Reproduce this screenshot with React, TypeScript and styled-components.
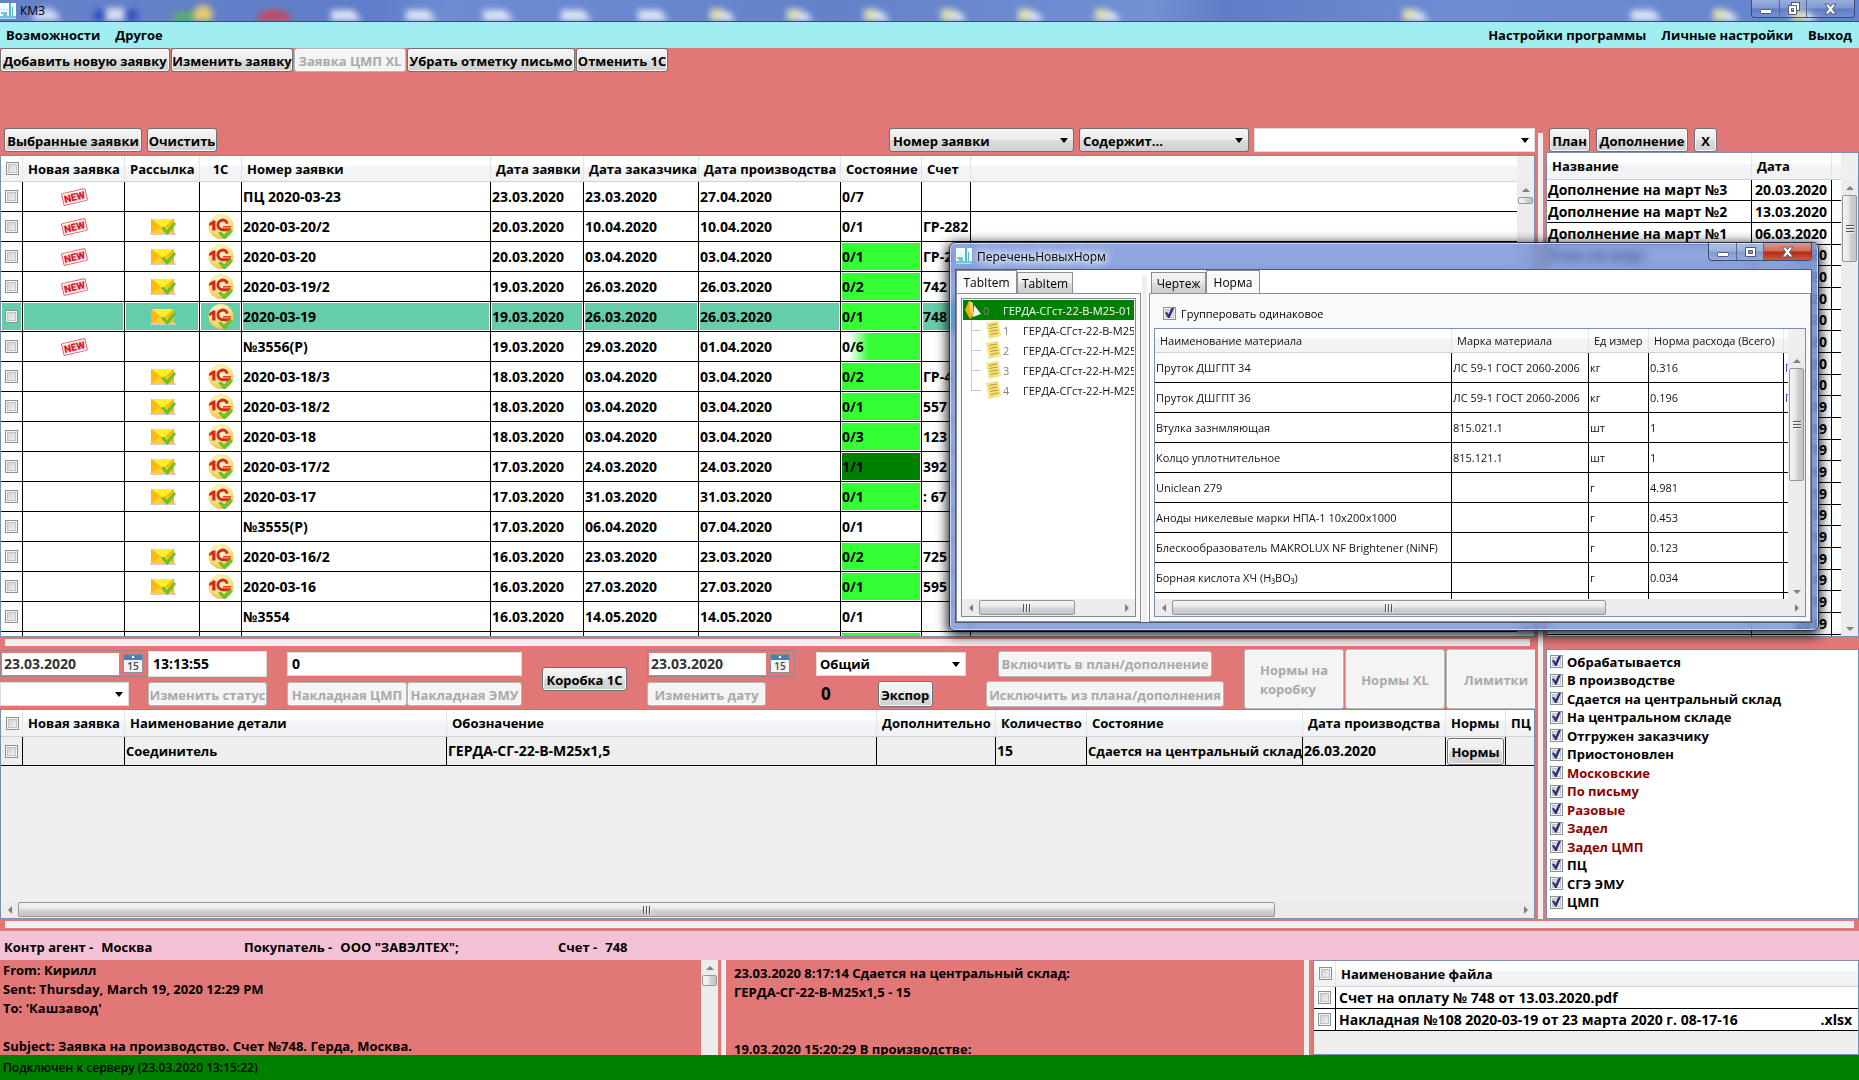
import React from 'react';
import styled, { createGlobalStyle, css } from 'styled-components';

const salmon = '#e27777';
const panelGray = '#efefef';
const frameBlue = '#7a8fae';

const GlobalStyle = createGlobalStyle`
  *, *::before, *::after { box-sizing: border-box; }
  body {
    margin: 0;
    background: ${salmon};
    overflow: hidden;
  }
  body, button, input, select, table {
    font-family: "Open Sans", "Noto Sans", sans-serif;
    font-size: 13px;
    font-weight: 700;
    color: #000;
  }
`;

const face = 'linear-gradient(#f4f4f4 0%, #ececec 50%, #dcdcdc 51%, #cfcfcf 100%)';

/* ---------- shared controls ---------- */

const Button = styled.button<{ $w?: number; $h?: number; $grow?: boolean }>`
  flex: ${p => (p.$grow ? '1 0 auto' : '0 0 auto')};
  width: ${p => (p.$w ? `${p.$w}px` : 'auto')};
  height: ${p => p.$h ?? 24}px;
  padding: 2px 0 0;
  display: flex;
  align-items: center;
  justify-content: center;
  line-height: 19px;
  white-space: nowrap;
  text-align: left;
  border: 1px solid #707070;
  border-radius: 3px;
  background: ${face};
  box-shadow: inset 0 0 0 1px #fafafa;
  &:disabled {
    color: #a9a9a9;
    border-color: #b6b6b6;
    background: #f4f4f4;
  }
`;

const Check = styled.input.attrs({ type: 'checkbox' })`
  appearance: none;
  flex: none;
  display: block;
  width: 13px;
  height: 13px;
  margin: 0;
  border: 1px solid #8e8f8f;
  background: linear-gradient(135deg, #c8ccd2, #f6f6f6);
  box-shadow: inset 0 0 0 1px #f4f4f4, inset 0 0 0 2px #bfc3c8;
  &:checked::before {
    content: '';
    display: block;
    width: 9px;
    height: 10px;
    margin: 0 0 0 1px;
    background: #2b2f7c;
    clip-path: polygon(0 45%, 22% 40%, 40% 62%, 72% 0, 100% 0, 52% 100%, 34% 100%);
  }
`;

const SelectBox = styled.span<{ $w?: number; $plain?: boolean; $h?: number }>`
  position: relative;
  display: block;
  flex: none;
  width: ${p => (p.$w ? `${p.$w}px` : '100%')};
  height: ${p => p.$h ?? 24}px;
  border: 1px solid ${p => (p.$plain ? '#dcdcdc' : '#707070')};
  border-radius: ${p => (p.$plain ? 0 : 3)}px;
  background: ${p => (p.$plain ? '#fff' : face)};
  &::after {
    content: '';
    position: absolute;
    right: 5px;
    top: 9px;
    border: 4px solid transparent;
    border-top: 5px solid #000;
    border-bottom: 0;
    pointer-events: none;
  }
`;

const SelectInner = styled.select`
  appearance: none;
  width: 100%;
  height: 100%;
  border: 0;
  padding: 1px 14px 0 3px;
  background: transparent;
`;

function Select(props: { label: string; value?: string; w?: number; plain?: boolean }) {
  return (
    <SelectBox $w={props.w} $plain={props.plain}>
      <SelectInner aria-label={props.label} defaultValue={props.value ?? ''}>
        <option>{props.value ?? ''}</option>
      </SelectInner>
    </SelectBox>
  );
}

const TextInput = styled.input<{ $w: number; $h?: number }>`
  flex: none;
  width: ${p => p.$w}px;
  height: ${p => p.$h ?? 24}px;
  padding: 0 4px;
  border: 1px solid #dcdcdc;
  background: #fff;
  font-size: 14px;
`;

/* ---------- scroll bars ---------- */

const Track = styled.div<{ $dir: 'v' | 'h' }>`
  flex: none;
  display: flex;
  align-items: center;
  flex-direction: ${p => (p.$dir === 'v' ? 'column' : 'row')};
  background: #ececec;
  ${p => (p.$dir === 'v' ? 'width: 17px;' : 'height: 17px;')}
`;

const Arrow = styled.span<{ $to: 'up' | 'down' | 'left' | 'right' }>`
  flex: none;
  width: 17px;
  height: 15px;
  display: flex;
  align-items: center;
  justify-content: center;
  &::before {
    content: '';
    border: 4px solid transparent;
    ${p => p.$to === 'up' && 'border-top: 0; border-bottom-color: #808080;'}
    ${p => p.$to === 'down' && 'border-bottom: 0; border-top-color: #808080;'}
    ${p => p.$to === 'left' && 'border-left: 0; border-right-color: #808080;'}
    ${p => p.$to === 'right' && 'border-right: 0; border-left-color: #808080;'}
  }
`;

const Thumb = styled.span<{ $dir: 'v' | 'h' }>`
  flex: none;
  display: flex;
  align-items: center;
  justify-content: center;
  border: 1px solid #979797;
  border-radius: 2px;
  background: linear-gradient(${p => (p.$dir === 'v' ? '90deg' : '180deg')}, #f5f5f5, #e6e6e8 49%, #d2d3d6 51%, #c4c5c9);
  ${p => (p.$dir === 'v' ? 'width: 15px;' : 'height: 15px;')}
`;

const Grip = styled.span<{ $dir: 'v' | 'h' }>`
  width: 8px;
  height: 8px;
  background: repeating-linear-gradient(
    ${p => (p.$dir === 'v' ? '180deg' : '90deg')},
    #555 0 1px,
    #f0f0f0 1px 2px,
    transparent 2px 3px
  );
`;

const Gap = styled.span`
  flex: 1;
`;

function ScrollBar(props: { dir: 'v' | 'h'; size: string; grip?: boolean; end?: boolean }) {
  const v = props.dir === 'v';
  return (
    <Track $dir={props.dir}>
      <Arrow $to={v ? 'up' : 'left'} />
      <Thumb $dir={props.dir} style={v ? { height: props.size } : { width: props.size }}>
        {props.grip && <Grip $dir={props.dir} />}
      </Thumb>
      <Gap />
      {props.end !== false && <Arrow $to={v ? 'down' : 'right'} />}
    </Track>
  );
}

/* ---------- data grids ---------- */

const GridFrame = styled.div<{ $gray?: boolean; $grow?: boolean; $h?: number }>`
  display: flex;
  min-height: 0;
  min-width: 0;
  overflow: hidden;
  border: 1px solid ${frameBlue};
  background: ${p => (p.$gray ? panelGray : '#fff')};
  ${p => p.$grow && 'flex: 1 1 0;'}
  ${p => p.$h && `height: ${p.$h}px;`}
`;

const GridView = styled.div`
  flex: 1;
  min-width: 0;
  overflow: hidden;
`;

const Column = styled.div`
  display: flex;
  flex-direction: column;
  flex: 1;
  min-width: 0;
  min-height: 0;
`;

const Fixed = styled.div`
  flex: none;
  display: flex;
  flex-direction: column;
`;

const SideTrack = styled.div`
  flex: 1;
  display: flex;
  min-height: 0;
`;

const HeaderCorner = styled.div<{ $h: number }>`
  flex: none;
  height: ${p => p.$h}px;
  background: ${panelGray};
`;

const Table = styled.table<{ $head: number; $row: number; $light?: boolean }>`
  width: 100%;
  table-layout: fixed;
  border-collapse: separate;
  border-spacing: 0;
  th, td {
    padding: 0;
    text-align: left;
    white-space: nowrap;
    overflow: hidden;
    line-height: 20px;
  }
  td { font-size: 14px; }
  th {
    height: ${p => p.$head}px;
    padding-left: 5px;
    border-right: 1px solid #e2e4e8;
    border-bottom: 1px solid #cfd2d6;
    background: linear-gradient(#fff 0%, #fff 40%, #f4f5f7 41%, #f0f2f5 100%);
  }
  td {
    height: ${p => p.$row}px;
    padding-left: 1px;
    border-right: 1px solid #000;
    border-bottom: 1px solid #000;
  }
  th:last-child, td:last-child { border-right: 0; }
  td input { margin-left: 3px; }
  ${p =>
    p.$light &&
    css`
      th, td { font-size: 11px; font-weight: 400; color: #111; }
    `}
`;

const OrderRow = styled.tr<{ $selected?: boolean }>`
  ${p =>
    p.$selected &&
    css`
      td { background: #66cdaa; box-shadow: inset 0 0 0 1px #fff; }
      td:last-child { background: #fff; }
    `}
`;

const StateCell = styled.td<{ $fill?: string }>`
  && {
    ${p => p.$fill && `background: ${p.$fill}; box-shadow: inset 0 0 0 1px #fff;`}
  }
`;

const StatusText = styled.span`
  font-size: 13px;
`;

const CenterHead = styled.div`
  padding-right: 5px;
  text-align: center;
`;

const Centered = styled.div`
  display: flex;
  justify-content: center;
  align-items: center;
  height: 28px;
`;

/* ---------- icons ---------- */

const NewIcon = () => (
  <svg width="27" height="18" viewBox="0 0 27 18">
    <g transform="rotate(-13 13.5 9)">
      <rect x="1.5" y="3" width="24" height="12" rx="1" fill="#fff" stroke="#e65a62" strokeWidth="1" />
      <rect x="3" y="4.5" width="21" height="9" fill="#fbdfe1" />
      <text x="13.5" y="12.6" textAnchor="middle" fontFamily="Roboto, sans-serif" fontWeight="900" fontSize="10" fill="#d3202c">
        NEW
      </text>
    </g>
  </svg>
);

const MailIcon = () => (
  <svg width="26" height="18" viewBox="0 0 26 18">
    <rect x="0" y="15" width="26" height="2" rx="1" fill="#cfcfcf" />
    <rect x="1" y="1" width="23" height="15" rx="1" fill="#fdb812" />
    <path d="M1 16 L10 8 H15 L24 16 Z" fill="#ffcf2b" />
    <path d="M1 1 H24 L13 11 Z" fill="#ffee2a" />
    <path d="M1 1 L13 11 L24 1" fill="none" stroke="#e8b400" strokeWidth="0.8" />
    <path d="M11 10 L14 8.5 L17 12 L24 4 L26 6 L18 16.5 H16.5 Z" fill="#6cc22c" />
  </svg>
);

const OneCIcon = () => (
  <svg width="26" height="26" viewBox="0 0 26 26">
    <defs>
      <radialGradient id="oneC" cx="0.45" cy="0.3" r="0.7">
        <stop offset="0" stopColor="#fffbe0" />
        <stop offset="0.55" stopColor="#fbea8c" />
        <stop offset="1" stopColor="#ecc04a" />
      </radialGradient>
    </defs>
    <circle cx="13" cy="12.5" r="12.5" fill="url(#oneC)" />
    <path d="M1 9.500 L5 6.500 H7.500 V16.500 H4.200 V10.800 L1 12 Z" fill="#d8291f" />
    <path d="M19.300 9.600 A4.800 4.800 0 1 0 15 15.700 H23" fill="none" stroke="#d8291f" strokeWidth="3" />
    <path d="M15 12.800 H23" fill="none" stroke="#d8291f" strokeWidth="1.400" />
    <path d="M10 18.500 L13 17.500 L16 20.500 L22.500 14.500 L25 17 L17.500 25 H15.500 Z" fill="#6cc22c" />
  </svg>
);

const AppIcon = () => (
  <svg width="16" height="16" viewBox="0 0 16 16">
    <rect width="16" height="16" fill="#f3fbfd" />
    <path d="M9 0 H11 V13 H9 Z M12 4 H13 V13 H12 Z" fill="#57b6cf" />
    <path d="M1 9 H7 V11 H1 Z M0 13 H16 V15.500 H0 Z M3 11 H7 V13 H3 Z" fill="#6fc6da" />
    <path d="M0 6 H8 V7 H0 Z" fill="#cdeaf2" />
  </svg>
);

const CalendarIcon = () => (
  <svg width="20" height="19" viewBox="0 0 20 19">
    <rect x="0.5" y="0.5" width="19" height="18" fill="#f4f4f4" stroke="#8b8f96" />
    <rect x="1" y="1" width="18" height="5" fill="#4a7fb0" />
    <circle cx="10" cy="3" r="1.2" fill="#fff" />
    <text x="10" y="15.5" textAnchor="middle" fontFamily="Open Sans, sans-serif" fontWeight="600" fontSize="10" fill="#4a4a4a">
      15
    </text>
  </svg>
);

const RootIcon = () => (
  <svg width="16" height="18" viewBox="0 0 16 18">
    <path d="M4 0 L8 2 V15 L5 18 L0 9 Z" fill="#f7a81b" />
    <path d="M4 0 L8 2 V15 L5 10 Z" fill="#ffd25a" />
    <path d="M9 4 L16 13 L8 16 Z" fill="#f2f6f8" />
  </svg>
);

const SheetIcon = () => (
  <svg width="15" height="18" viewBox="0 0 15 18">
    <path d="M0 2 L12 0 L15 15 L3 18 Z" fill="#f4e27c" />
    <path d="M3 4.500 L11 3 M3.500 7.500 L11.500 6 M4 10.500 L12 9 M4.500 13.500 L12.500 12" stroke="#b99a2e" strokeWidth="1" />
  </svg>
);

const MinGlyph = () => (
  <svg width="14" height="12" viewBox="0 0 14 12">
    <rect x="1.5" y="6.5" width="11" height="4" rx="1" fill="#fff" stroke="#555b6e" />
  </svg>
);
const MaxGlyph = () => (
  <svg width="13" height="12" viewBox="0 0 13 12">
    <path fillRule="evenodd" d="M1.500 1.500 H11.500 V10.500 H1.500 Z M4.500 4.500 V7.500 H8.500 V4.500 Z" fill="#fff" stroke="#555b6e" />
  </svg>
);
const RestoreGlyph = () => (
  <svg width="13" height="13" viewBox="0 0 13 13">
    <rect x="4.5" y="0.5" width="8" height="8" fill="#fff" stroke="#555b6e" />
    <path fillRule="evenodd" d="M1.500 3.500 H9.500 V12.500 H1.500 Z M4.500 6.500 V9.500 H6.500 V6.500 Z" fill="#fff" stroke="#555b6e" />
  </svg>
);
const CloseGlyph = () => (
  <svg width="13" height="12" viewBox="0 0 13 12">
    <path d="M1 1 H4.500 L6.500 3.500 L8.500 1 H12 L8.500 6 L12 11 H8.500 L6.500 8.500 L4.500 11 H1 L4.500 6 Z" fill="#fff" stroke="#555b6e" />
  </svg>
);

/* ---------- main window chrome ---------- */

const Window = styled.div`
  display: flex;
  flex-direction: column;
  height: 100vh;
  background: ${salmon};
`;

const TitleBar = styled.header`
  position: relative;
  flex: none;
  display: flex;
  align-items: center;
  height: 22px;
  overflow: hidden;
  border-bottom: 1px solid #3b4a78;
  background: linear-gradient(100deg, #6583c8, #5f7dc8 20%, #6d8cd2 24%, #6482ca 45%, #7290d4 62%, #5f7dc6 66%, #6f8dd3 78%, #6583cc);
`;

const Desktop = styled.svg`
  position: absolute;
  left: 0;
  top: 0;
  width: 1859px;
  height: 21px;
  filter: blur(3px);
`;

const TitleText = styled.span`
  position: relative;
  display: flex;
  align-items: center;
  gap: 4px;
  font-size: 12px;
  font-weight: 400;
`;

const Caption = styled.div<{ $glass?: boolean }>`
  position: absolute;
  top: 0;
  right: ${p => (p.$glass ? 6 : 4)}px;
  display: flex;
  height: 18px;
  border: 1px solid #3d4a73;
  border-top: 0;
  border-radius: 0 0 4px 4px;
  overflow: hidden;
`;

const CaptionButton = styled.button<{ $w: number; $red?: boolean }>`
  display: flex;
  align-items: center;
  justify-content: center;
  width: ${p => p.$w}px;
  height: 100%;
  padding: 0;
  border: 0;
  border-right: 1px solid #5a678f;
  background: ${p =>
    p.$red
      ? 'linear-gradient(#dc9a8c, #cf6a55 48%, #b02a14 52%, #cf5a3c)'
      : 'linear-gradient(rgba(255,255,255,.35), rgba(255,255,255,.15) 48%, rgba(40,60,120,.12) 52%, rgba(255,255,255,.1))'};
  &:last-child { border-right: 0; }
`;

const MenuBar = styled.nav`
  flex: none;
  display: flex;
  align-items: center;
  gap: 15px;
  height: 26px;
  padding: 0 7px 0 6px;
  background: #a0edf1;
`;

const MenuLink = styled.a`
  color: #000;
  text-decoration: none;
  line-height: 20px;
`;

const PushRight = styled.span`
  margin-left: auto;
`;

const Toolbar = styled.div`
  flex: none;
  display: flex;
  gap: 1px;
  height: 80px;
  align-items: flex-start;
`;

const Workspace = styled.div`
  flex: 1;
  display: flex;
  min-height: 0;
`;

const FilterRow = styled.div`
  flex: none;
  display: flex;
  align-items: center;
  gap: 5px;
  height: 24px;
  margin-bottom: 3px;
  padding-left: 4px;
`;

const SideButtons = styled(FilterRow)`
  gap: 6px;
  margin-bottom: 0;
  padding-left: 3px;
`;

const SplitterH = styled.div`
  flex: none;
  height: 12px;
  padding: 2px 5px 3px;
  &::before {
    content: '';
    display: block;
    height: 100%;
    background: ${panelGray};
  }
`;

const SplitterV = styled.div<{ $l: number; $r: number; $top?: number }>`
  flex: none;
  width: 5px;
  margin: ${p => p.$top ?? 0}px ${p => p.$r}px 0 ${p => p.$l}px;
  background: ${panelGray};
`;

const SideColumn = styled.aside`
  flex: none;
  display: flex;
  flex-direction: column;
  width: 313px;
  min-height: 0;
`;

/* ---------- edit form ---------- */

const FormRow = styled.div`
  flex: none;
  display: flex;
  gap: 20px;
  height: 60px;
  overflow: hidden;
`;

const FormGroup = styled.div<{ $w: number }>`
  flex: none;
  width: ${p => p.$w}px;
  display: grid;
  grid-template-rows: 27px 26px;
  row-gap: 4px;
  padding-top: 1px;
`;

const FormLine = styled.div<{ $gap?: number; $split?: boolean; $center?: boolean }>`
  display: flex;
  align-items: center;
  gap: ${p => p.$gap ?? 0}px;
  justify-content: ${p => (p.$split ? 'space-between' : p.$center ? 'center' : 'flex-start')};
`;

const Middle = styled.div`
  display: flex;
  align-items: center;
`;

const DateBox = styled.div`
  flex: none;
  display: flex;
  align-items: center;
  gap: 4px;
  width: 148px;
  height: 27px;
  padding: 2px 2px 2px 1px;
  border: 1px solid #a58088;
`;

const DateInput = styled.input`
  width: 117px;
  height: 22px;
  padding: 0 2px;
  border: 0;
  color: #333;
  background: #fff;
  font-size: 14px;
`;

const IconButton = styled.button`
  display: flex;
  padding: 0;
  border: 0;
  background: none;
`;

const Total = styled.output`
  padding-left: 5px;
  font-size: 17px;
  line-height: 24px;
`;

const BigButtons = styled.div`
  flex: 1;
  display: flex;
  gap: 1px;
  min-width: 0;
  overflow: hidden;
`;

const CheckPanel = styled.div`
  flex: none;
  height: 270px;
  margin-top: 12px;
  padding: 2px 3px;
  border: 1px solid ${frameBlue};
  background: #fff;
`;

const CheckLine = styled.label<{ $red?: boolean }>`
  display: flex;
  align-items: center;
  gap: 4px;
  height: 18px;
  line-height: 18px;
  color: ${p => (p.$red ? '#8b0000' : '#000')};
  &:nth-child(odd) { height: 19px; }
`;

/* ---------- bottom ---------- */

const InfoBar = styled.div`
  flex: none;
  display: grid;
  grid-template-columns: 240px 314px 1fr;
  align-items: center;
  height: 29px;
  padding: 2px 0 0 4px;
  background: #f3c2d6;
  line-height: 20px;
`;

const InfoItem = styled.span`
  display: flex;
  gap: 8px;
`;

const Bottom = styled.div`
  flex: none;
  display: flex;
  height: 95px;
`;

const TextPane = styled.div<{ $w?: number; $pad: number; $top: number }>`
  ${p => (p.$w ? `flex: 0 0 ${p.$w}px;` : 'flex: 1;')}
  min-width: 0;
  overflow: hidden;
  padding: ${p => p.$top}px 0 0 ${p => p.$pad}px;
  line-height: 19px;
  white-space: pre;
`;

const FilePane = styled.div`
  flex: none;
  display: flex;
  width: 546px;
`;

const FileName = styled.span`
  display: flex;
  justify-content: space-between;
  padding: 0 6px 0 0;
`;

const StatusBar = styled.footer`
  flex: none;
  display: flex;
  align-items: center;
  height: 25px;
  padding-left: 3px;
  background: #008000;
  font-size: 12px;
  font-weight: 600;
`;

/* ---------- floating window ---------- */

const Dialog = styled.section`
  position: absolute;
  left: 949px;
  top: 242px;
  width: 870px;
  height: 389px;
  display: flex;
  flex-direction: column;
  padding: 0 6px 7px 5px;
  border: 1px solid #26304c;
  border-radius: 6px;
  background: rgba(96, 130, 208, 0.7);
  backdrop-filter: blur(4px);
  box-shadow: inset 0 0 0 1px rgba(225, 235, 255, 0.75), 0 3px 12px 2px rgba(0, 0, 0, 0.85);
`;

const DialogTitle = styled.header`
  flex: none;
  display: flex;
  align-items: center;
  height: 26px;
  padding-left: 1px;
  font-size: 12px;
  font-weight: 400;
  gap: 5px;
`;

const GlowText = styled.span`
  text-shadow: 0 0 6px #fff, 0 0 10px #fff, 0 0 10px #fff;
`;

const DialogBody = styled.div`
  flex: 1;
  display: flex;
  min-height: 0;
  border: 1px solid #4c5a80;
  background: #fff;
`;

const TabArea = styled.div<{ $w?: number }>`
  ${p => (p.$w ? `flex: 0 0 ${p.$w}px;` : 'flex: 1;')}
  display: flex;
  flex-direction: column;
  min-width: 0;
`;

const Tabs = styled.div<{ $pad?: number }>`
  flex: none;
  display: flex;
  align-items: flex-end;
  height: 23px;
  padding-left: ${p => p.$pad ?? 0}px;
`;

const Tab = styled.button<{ $active?: boolean; $w: number }>`
  width: ${p => p.$w}px;
  height: ${p => (p.$active ? 23 : 21)}px;
  padding: 0;
  font-size: 12px;
  font-weight: 400;
  border: 1px solid #8c8e94;
  border-bottom: 0;
  background: ${p => (p.$active ? '#f9f9f9' : 'linear-gradient(#f3f3f3, #ebebeb 50%, #ddd 51%, #cdcdcd)')};
`;

const TabPanel = styled.div<{ $pad: string }>`
  flex: 1;
  display: flex;
  flex-direction: column;
  min-height: 0;
  padding: ${p => p.$pad};
  border: 1px solid #8c8e94;
  background: #f9f9f9;
`;

const TreeBox = styled.div`
  flex: 1;
  display: flex;
  flex-direction: column;
  overflow: hidden;
  border: 1px solid #828790;
  background: #fff;
`;

const Tree = styled.ul`
  flex: 1;
  margin: 0;
  padding: 1px;
  list-style: none;
  font-size: 11px;
  font-weight: 400;
`;

const TreeItem = styled.li<{ $root?: boolean }>`
  display: grid;
  grid-template-columns: ${p => (p.$root ? '18px 20px 1fr' : '21px 17px 20px 1fr')};
  align-items: center;
  height: 20px;
  padding-left: 2px;
  overflow: hidden;
  white-space: nowrap;
  color: ${p => (p.$root ? '#fff' : '#111')};
  background: ${p => (p.$root ? '#008000' : '#fff')};
`;

const Branch = styled.span<{ $last?: boolean }>`
  align-self: stretch;
  width: 10px;
  margin-left: 6px;
  background:
    linear-gradient(#c8c8c8, #c8c8c8) 0 0 / 1px ${p => (p.$last ? '10px' : '20px')} no-repeat,
    linear-gradient(#c8c8c8, #c8c8c8) 0 10px / 10px 1px no-repeat;
`;

const TreeIndex = styled.span`
  color: #808080;
`;

const GroupLine = styled.label`
  flex: none;
  display: flex;
  align-items: center;
  gap: 5px;
  height: 34px;
  padding: 5px 0 0 9px;
  font-size: 11px;
  font-weight: 400;
`;

const Clue = styled.span`
  color: #2040c0;
`;

/* ---------- content ---------- */

type Order = {
  fresh?: boolean;
  sent?: boolean;
  no: string;
  d1: string;
  d2: string;
  d3: string;
  state: string;
  fill?: string;
  bill?: string;
  selected?: boolean;
};

const lime = '#33ff33';

const orders: Order[] = [
  { fresh: true, no: 'ПЦ 2020-03-23', d1: '23.03.2020', d2: '23.03.2020', d3: '27.04.2020', state: '0/7' },
  { fresh: true, sent: true, no: '2020-03-20/2', d1: '20.03.2020', d2: '10.04.2020', d3: '10.04.2020', state: '0/1', bill: 'ГР-282' },
  { fresh: true, sent: true, no: '2020-03-20', d1: '20.03.2020', d2: '03.04.2020', d3: '03.04.2020', state: '0/1', fill: lime, bill: 'ГР-2' },
  { fresh: true, sent: true, no: '2020-03-19/2', d1: '19.03.2020', d2: '26.03.2020', d3: '26.03.2020', state: '0/2', fill: lime, bill: '742' },
  { sent: true, no: '2020-03-19', d1: '19.03.2020', d2: '26.03.2020', d3: '26.03.2020', state: '0/1', fill: lime, bill: '748', selected: true },
  { fresh: true, no: '№3556(Р)', d1: '19.03.2020', d2: '29.03.2020', d3: '01.04.2020', state: '0/6', fill: `linear-gradient(90deg, #fff 10%, ${lime} 35%)` },
  { sent: true, no: '2020-03-18/3', d1: '18.03.2020', d2: '03.04.2020', d3: '03.04.2020', state: '0/2', fill: lime, bill: 'ГР-4' },
  { sent: true, no: '2020-03-18/2', d1: '18.03.2020', d2: '03.04.2020', d3: '03.04.2020', state: '0/1', fill: lime, bill: '557' },
  { sent: true, no: '2020-03-18', d1: '18.03.2020', d2: '03.04.2020', d3: '03.04.2020', state: '0/3', fill: lime, bill: '123' },
  { sent: true, no: '2020-03-17/2', d1: '17.03.2020', d2: '24.03.2020', d3: '24.03.2020', state: '1/1', fill: '#008000', bill: '392' },
  { sent: true, no: '2020-03-17', d1: '17.03.2020', d2: '31.03.2020', d3: '31.03.2020', state: '0/1', fill: lime, bill: ': 67' },
  { no: '№3555(Р)', d1: '17.03.2020', d2: '06.04.2020', d3: '07.04.2020', state: '0/1' },
  { sent: true, no: '2020-03-16/2', d1: '16.03.2020', d2: '23.03.2020', d3: '23.03.2020', state: '0/2', fill: lime, bill: '725' },
  { sent: true, no: '2020-03-16', d1: '16.03.2020', d2: '27.03.2020', d3: '27.03.2020', state: '0/1', fill: lime, bill: '595' },
  { no: '№3554', d1: '16.03.2020', d2: '14.05.2020', d3: '14.05.2020', state: '0/1' },
  { no: '', d1: '', d2: '', d3: '', state: '', fill: lime },
];

const plans: [string, string][] = [
  ['Дополнение на март №3', '20.03.2020'],
  ['Дополнение на март №2', '13.03.2020'],
  ['Дополнение на март №1', '06.03.2020'],
  ['План на март', '2020'],
  ...Array.from({ length: 6 }, (): [string, string] => ['', '2020']),
  ...Array.from({ length: 11 }, (): [string, string] => ['', '2019']),
  ['', ''],
];

const norms = [
  ['Пруток ДШГПТ 34', 'ЛС 59-1 ГОСТ 2060-2006', 'кг', '0.316', 'П'],
  ['Пруток ДШГПТ 36', 'ЛС 59-1 ГОСТ 2060-2006', 'кг', '0.196', 'П'],
  ['Втулка зазнмляющая', '815.021.1', 'шт', '1', ''],
  ['Колцо уплотнительное', '815.121.1', 'шт', '1', ''],
  ['Uniclean 279', '', 'г', '4.981', ''],
  ['Аноды никелевые марки НПА-1 10х200х1000', '', 'г', '0.453', ''],
  ['Блескообразователь MAKROLUX NF Brightener (NiNF)', '', 'г', '0.123', ''],
  ['Борная кислота ХЧ (H₃BO₃)', '', 'г', '0.034', ''],
  ['', '', '', '', ''],
];

const filters: [string, boolean?][] = [
  ['Обрабатывается'],
  ['В производстве'],
  ['Сдается на центральный склад'],
  ['На центральном складе'],
  ['Отгружен заказчику'],
  ['Приостоновлен'],
  ['Московские', true],
  ['По письму', true],
  ['Разовые', true],
  ['Задел', true],
  ['Задел ЦМП', true],
  ['ПЦ'],
  ['СГЭ ЭМУ'],
  ['ЦМП'],
];

const tree = ['ГЕРДА-СГст-22-В-М25', 'ГЕРДА-СГст-22-Н-М25', 'ГЕРДА-СГст-22-Н-М25', 'ГЕРДА-СГст-22-Н-М25'];

const mail = `From: Кирилл
Sent: Thursday, March 19, 2020 12:29 PM
To: 'Кашзавод'

Subject: Заявка на производство. Счет №748. Герда, Москва.`;

const history = `23.03.2020 8:17:14 Сдается на центральный склад:
ГЕРДА-СГ-22-В-М25х1,5 - 15


19.03.2020 15:20:29 В производстве:`;

const PlanTable = styled(Table)`
  tbody tr:nth-child(3n + 1) td { height: 21px; }
  td:nth-child(2) { text-align: right; padding-right: 4px; }
`;

const FilesTable = styled(Table)`
  background: #fff;
  td:nth-child(2) { padding-left: 3px; }
`;

const DetailTable = styled(Table)`
  td { background: ${panelGray}; }
`;

function Cols({ widths }: { widths: (number | null)[] }) {
  return (
    <colgroup>
      {widths.map((w, i) => (
        <col key={i} style={w ? { width: w } : undefined} />
      ))}
    </colgroup>
  );
}

function OrdersGrid() {
  return (
    <GridFrame $grow>
      <GridView>
        <Table $head={26} $row={30}>
          <Cols widths={[22, 102, 75, 42, 249, 93, 115, 142, 81, 49, null]} />
          <thead>
            <tr>
              <th><Check aria-label="Выбрать все заявки" /></th>
              <th>Новая заявка</th>
              <th>Рассылка</th>
              <th><CenterHead>1С</CenterHead></th>
              <th>Номер заявки</th>
              <th>Дата заявки</th>
              <th>Дата заказчика</th>
              <th>Дата производства</th>
              <th>Состояние</th>
              <th>Счет</th>
              <th />
            </tr>
          </thead>
          <tbody>
            {orders.map((o, i) => (
              <OrderRow key={i} $selected={o.selected}>
                <td>{o.no && <Check aria-label={`Выбрать ${o.no}`} />}</td>
                <td>{o.fresh && <Centered><NewIcon /></Centered>}</td>
                <td>{o.sent && <Centered><MailIcon /></Centered>}</td>
                <td>{o.sent && <Centered><OneCIcon /></Centered>}</td>
                <td>{o.no}</td>
                <td>{o.d1}</td>
                <td>{o.d2}</td>
                <td>{o.d3}</td>
                <StateCell $fill={o.fill}>{o.state}</StateCell>
                <td>{o.bill}</td>
                <td />
              </OrderRow>
            ))}
          </tbody>
        </Table>
      </GridView>
      <Fixed>
        <HeaderCorner $h={26} />
        <SideTrack><ScrollBar dir="v" size="7px" /></SideTrack>
      </Fixed>
    </GridFrame>
  );
}

function DetailGrid() {
  return (
    <GridFrame $gray $h={210}>
      <Column>
        <GridView>
          <DetailTable $head={27} $row={29}>
            <Cols widths={[22, 102, 322, 430, 119, 91, 216, 143, 60, null]} />
            <thead>
              <tr>
                <th><Check aria-label="Выбрать все детали" /></th>
                <th>Новая заявка</th>
                <th>Наименование детали</th>
                <th>Обозначение</th>
                <th>Дополнительно</th>
                <th>Количество</th>
                <th>Состояние</th>
                <th>Дата производства</th>
                <th>Нормы</th>
                <th>ПЦ</th>
              </tr>
            </thead>
            <tbody>
              <tr>
                <td><Check aria-label="Выбрать Соединитель" /></td>
                <td />
                <td><StatusText>Соединитель</StatusText></td>
                <td>ГЕРДА-СГ-22-В-М25х1,5</td>
                <td />
                <td>15</td>
                <td><StatusText>Сдается на центральный склад</StatusText></td>
                <td>26.03.2020</td>
                <td><Button $w={57} $h={27}>Нормы</Button></td>
                <td />
              </tr>
            </tbody>
          </DetailTable>
        </GridView>
        <ScrollBar dir="h" size="82%" grip />
      </Column>
    </GridFrame>
  );
}

function DatePicker({ label }: { label: string }) {
  return (
    <DateBox>
      <DateInput aria-label={label} defaultValue="23.03.2020" />
      <IconButton aria-label="Открыть календарь"><CalendarIcon /></IconButton>
    </DateBox>
  );
}

function EditForm() {
  return (
    <FormRow>
      <FormGroup $w={267}>
        <FormLine $split>
          <DatePicker label="Дата статуса" />
          <TextInput $w={119} $h={26} aria-label="Время" defaultValue="13:13:55" />
        </FormLine>
        <FormLine $split>
          <Select label="Статус" w={129} plain />
          <Button $w={119} disabled>Изменить статус</Button>
        </FormLine>
      </FormGroup>
      <FormGroup $w={235}>
        <FormLine><TextInput $w={235} aria-label="Накладная" defaultValue="0" /></FormLine>
        <FormLine $split>
          <Button $w={120} disabled>Накладная ЦМП</Button>
          <Button $w={115} disabled>Накладная ЭМУ</Button>
        </FormLine>
      </FormGroup>
      <Middle><Button $w={85}>Коробка 1С</Button></Middle>
      <FormGroup $w={149}>
        <FormLine><DatePicker label="Дата производства" /></FormLine>
        <FormLine><Button $w={119} disabled>Изменить дату</Button></FormLine>
      </FormGroup>
      <FormGroup $w={150}>
        <FormLine><Select label="Вид" value="Общий" w={150} plain /></FormLine>
        <FormLine $gap={47}>
          <Total>0</Total>
          <Button $w={55} $h={26}>Экспор</Button>
        </FormLine>
      </FormGroup>
      <FormGroup $w={238}>
        <FormLine $center><Button $w={214} $h={26} disabled>Включить в план/дополнение</Button></FormLine>
        <FormLine><Button $w={238} $h={26} disabled>Исключить из плана/дополнения</Button></FormLine>
      </FormGroup>
      <BigButtons>
        <Button $w={100} $h={60} disabled>Нормы на<br />коробку</Button>
        <Button $w={100} $h={60} disabled>Нормы XL</Button>
        <Button $w={100} $h={60} disabled>Лимитки</Button>
      </BigButtons>
    </FormRow>
  );
}

function NormsDialog() {
  return (
    <Dialog>
      <DialogTitle>
        <AppIcon />
        <GlowText>ПереченьНовыхНорм</GlowText>
        <Caption $glass>
          <CaptionButton $w={28} aria-label="Свернуть"><MinGlyph /></CaptionButton>
          <CaptionButton $w={27} aria-label="Развернуть"><MaxGlyph /></CaptionButton>
          <CaptionButton $w={47} $red aria-label="Закрыть"><CloseGlyph /></CaptionButton>
        </Caption>
      </DialogTitle>
      <DialogBody>
        <TabArea $w={185}>
          <Tabs>
            <Tab $active $w={61}>TabItem</Tab>
            <Tab $w={56}>TabItem</Tab>
          </Tabs>
          <TabPanel $pad="4px">
            <TreeBox>
              <Tree>
                <TreeItem $root>
                  <RootIcon />
                  <TreeIndex>0</TreeIndex>
                  <span>ГЕРДА-СГст-22-В-М25-01</span>
                </TreeItem>
                {tree.map((name, i) => (
                  <TreeItem key={i}>
                    <Branch $last={i === 3} />
                    <SheetIcon />
                    <TreeIndex>{i + 1}</TreeIndex>
                    <span>{name}</span>
                  </TreeItem>
                ))}
              </Tree>
              <ScrollBar dir="h" size="96px" grip />
            </TreeBox>
          </TabPanel>
        </TabArea>
        <SplitterV $l={1} $r={2} $top={5} />
        <TabArea>
          <Tabs $pad={2}>
            <Tab $w={55}>Чертеж</Tab>
            <Tab $active $w={54}>Норма</Tab>
          </Tabs>
          <TabPanel $pad="0 4px 4px 4px">
            <GroupLine>
              <Check defaultChecked />
              Групперовать одинаковое
            </GroupLine>
            <GridFrame $grow>
              <Column>
                <SideTrack>
                  <GridView>
                    <Table $head={24} $row={30} $light>
                      <Cols widths={[297, 137, 60, 135, null]} />
                      <thead>
                        <tr>
                          <th>Наименование материала</th>
                          <th>Марка материала</th>
                          <th>Ед измер</th>
                          <th>Норма расхода (Всего)</th>
                          <th />
                        </tr>
                      </thead>
                      <tbody>
                        {norms.map((n, i) => (
                          <tr key={i}>
                            <td>{n[0]}</td>
                            <td>{n[1]}</td>
                            <td>{n[2]}</td>
                            <td>{n[3]}</td>
                            <td><Clue>{n[4]}</Clue></td>
                          </tr>
                        ))}
                      </tbody>
                    </Table>
                  </GridView>
                  <Fixed>
                    <HeaderCorner $h={24} />
                    <SideTrack><ScrollBar dir="v" size="113px" grip /></SideTrack>
                  </Fixed>
                </SideTrack>
                <ScrollBar dir="h" size="434px" grip />
              </Column>
            </GridFrame>
          </TabPanel>
        </TabArea>
      </DialogBody>
    </Dialog>
  );
}

const folderXs = [715, 792, 869, 946, 1023, 1100, 1408, 1718, 1796];
const pageXs = [345, 420, 497, 575, 652, 1645];

function DesktopBehind() {
  return (
    <Desktop viewBox="0 0 1859 21" preserveAspectRatio="none" aria-hidden>
      <circle cx="46" cy="22" r="14" fill="#cfd8f4" />
      <path d="M94 10 H104 V22 H94 Z M127 10 H137 V22 H127 Z" fill="#2c50c0" />
      <rect x="106" y="8" width="18" height="14" fill="#d5dcf2" />
      <ellipse cx="184" cy="18" rx="12" ry="7" fill="#58b068" />
      <circle cx="203" cy="15" r="10" fill="#e2cc70" />
      <ellipse cx="274" cy="19" rx="17" ry="9" fill="#c8485a" />
      {pageXs.map(x => (
        <path key={x} d={`M${x - 14} 10 H${x + 8} L${x + 18} 22 H${x - 14} Z`} fill="#dbe4f6" />
      ))}
      {folderXs.map(x => (
        <g key={x}>
          <path d={`M${x - 5} 9 H${x + 8} L${x + 14} 22 H${x - 5} Z`} fill="#dfe0b0" />
          <path d={`M${x + 6} 12 H${x + 14} L${x + 22} 22 H${x + 6} Z`} fill="#dde6f7" />
        </g>
      ))}
    </Desktop>
  );
}

export default function App() {
  return (
    <Window>
      <GlobalStyle />
      <TitleBar>
        <DesktopBehind />
        <TitleText><AppIcon />КМЗ</TitleText>
        <Caption>
          <CaptionButton $w={28} aria-label="Свернуть"><MinGlyph /></CaptionButton>
          <CaptionButton $w={27} aria-label="Восстановить"><RestoreGlyph /></CaptionButton>
          <CaptionButton $w={47} aria-label="Закрыть"><CloseGlyph /></CaptionButton>
        </Caption>
      </TitleBar>
      <MenuBar>
        <MenuLink href="#features">Возможности</MenuLink>
        <MenuLink href="#other">Другое</MenuLink>
        <PushRight />
        <MenuLink href="#settings">Настройки программы</MenuLink>
        <MenuLink href="#personal">Личные настройки</MenuLink>
        <MenuLink href="#exit">Выход</MenuLink>
      </MenuBar>
      <Toolbar>
        <Button $w={170}>Добавить новую заявку</Button>
        <Button $w={122}>Изменить заявку</Button>
        <Button $w={112} disabled>Заявка ЦМП XL</Button>
        <Button $w={168}>Убрать отметку письмо</Button>
        <Button $w={92}>Отменить 1С</Button>
      </Toolbar>
      <Workspace>
        <Column>
          <FilterRow>
            <Button $w={138}>Выбранные заявки</Button>
            <Button $w={70}>Очистить</Button>
            <Gap />
            <Select label="Поле поиска" value="Номер заявки" w={185} />
            <Select label="Условие" value="Содержит..." w={170} />
            <Select label="Значение" w={281} plain />
          </FilterRow>
          <OrdersGrid />
          <SplitterH />
          <EditForm />
          <DetailGrid />
        </Column>
        <SplitterV $l={3} $r={3} $top={5} />
        <SideColumn>
          <SideButtons>
            <Button $w={41}>План</Button>
            <Button $w={92}>Дополнение</Button>
            <Button $w={23}>X</Button>
          </SideButtons>
          <GridFrame $grow>
            <GridView>
              <PlanTable $head={27} $row={22}>
                <Cols widths={[205, 80, null]} />
                <thead>
                  <tr><th>Название</th><th>Дата</th><th /></tr>
                </thead>
                <tbody>
                  {plans.map((p, i) => (
                    <tr key={i}><td>{p[0]}</td><td>{p[1]}</td><td /></tr>
                  ))}
                </tbody>
              </PlanTable>
            </GridView>
            <Fixed>
              <HeaderCorner $h={27} />
              <SideTrack><ScrollBar dir="v" size="67px" grip /></SideTrack>
            </Fixed>
          </GridFrame>
          <CheckPanel>
            {filters.map(([name, red]) => (
              <CheckLine key={name} $red={red}>
                <Check defaultChecked />
                {name}
              </CheckLine>
            ))}
          </CheckPanel>
        </SideColumn>
      </Workspace>
      <SplitterH />
      <InfoBar>
        <InfoItem><span>Контр агент -</span><span>Москва</span></InfoItem>
        <InfoItem><span>Покупатель -</span><span>ООО "ЗАВЭЛТЕХ";</span></InfoItem>
        <InfoItem><span>Счет -</span><span>748</span></InfoItem>
      </InfoBar>
      <Bottom>
        <TextPane $w={701} $pad={3} $top={1}>{mail}</TextPane>
        <ScrollBar dir="v" size="11px" end={false} />
        <SplitterV $l={3} $r={3} />
        <TextPane $pad={5} $top={4}>{history}</TextPane>
        <SplitterV $l={0} $r={4} />
        <FilePane>
          <GridFrame $gray $grow>
            <GridView>
              <FilesTable $head={26} $row={22}>
                <Cols widths={[22, null]} />
                <thead>
                  <tr>
                    <th><Check aria-label="Выбрать все файлы" /></th>
                    <th>Наименование файла</th>
                  </tr>
                </thead>
                <tbody>
                  <tr>
                    <td><Check aria-label="Выбрать счет" /></td>
                    <td><FileName>Счет на оплату № 748 от 13.03.2020.pdf</FileName></td>
                  </tr>
                  <tr>
                    <td><Check aria-label="Выбрать накладную" /></td>
                    <td><FileName><span>Накладная №108 2020-03-19 от 23 марта 2020 г. 08-17-16</span><span>.xlsx</span></FileName></td>
                  </tr>
                </tbody>
              </FilesTable>
            </GridView>
          </GridFrame>
        </FilePane>
      </Bottom>
      <StatusBar>Подключен к серверу (23.03.2020 13:15:22)</StatusBar>
      <NormsDialog />
    </Window>
  );
}
